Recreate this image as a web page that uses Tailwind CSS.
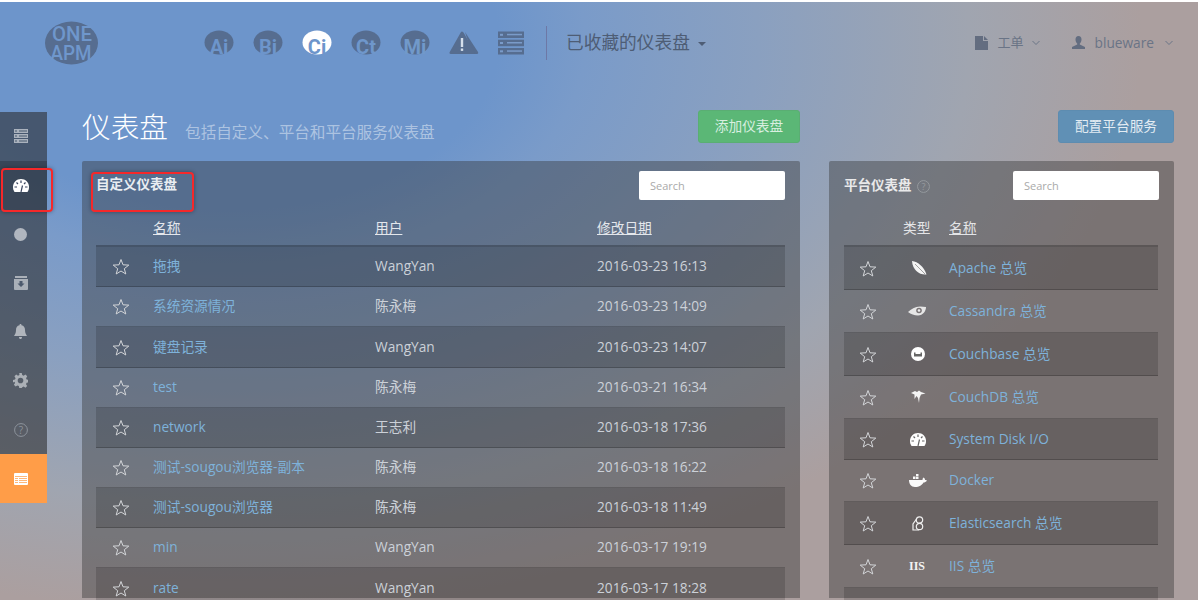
<!DOCTYPE html>
<html><head><meta charset="utf-8"><script src="https://cdn.jsdelivr.net/npm/@tailwindcss/browser@4"></script></head>
<body class="m-0">
<div class="relative w-[1198px] h-[600px] overflow-hidden border-t-2 border-white bg-[radial-gradient(ellipse_960px_600px_at_230px_40px,#6d95cb_28%,#7a9bc9_37%,#8aa0c0_55%,#a0a5b0_77%,#ab9f9f_95%)] font-['Open_Sans','Noto_Sans_CJK_SC',sans-serif] text-[14px]">

<!-- header -->
<header class="flex items-center h-[108px] pb-[26px] text-[#566a88]">
  <svg class="ml-[44px] w-[56px] h-[44px]" viewBox="0 0 56 44"><ellipse cx="27.500" cy="22" rx="26.500" ry="21.500" fill="#566d90"/><text x="28" y="20" text-anchor="middle" font-size="21" font-weight="500" font-family="Roboto" fill="#6f97cc" textLength="40" lengthAdjust="spacingAndGlyphs">ONE</text><text x="27" y="39" text-anchor="middle" font-size="21" font-weight="500" font-family="Roboto" fill="#6f97cc" textLength="41" lengthAdjust="spacingAndGlyphs">APM</text></svg>
  <div class="flex items-center ml-[104px] gap-[19px]">
    <svg class="w-[30px] h-[26px]" viewBox="0 0 30 26"><ellipse cx="15" cy="12.500" rx="14.500" ry="12" fill="#566d90"/><text x="15" y="24" text-anchor="middle" font-size="20" font-weight="700" font-family="Roboto" fill="#6d95cb">Ai</text></svg>
    <svg class="w-[30px] h-[26px]" viewBox="0 0 30 26"><ellipse cx="15" cy="12.500" rx="14.500" ry="12" fill="#566d90"/><text x="15" y="24" text-anchor="middle" font-size="20" font-weight="700" font-family="Roboto" fill="#6d95cb">Bi</text></svg>
    <svg class="w-[30px] h-[26px]" viewBox="0 0 30 26"><ellipse cx="15" cy="12.500" rx="14.500" ry="12" fill="#fff"/><text x="15" y="24" text-anchor="middle" font-size="20" font-weight="700" font-family="Roboto" fill="#6d95cb">Ci</text></svg>
    <svg class="w-[30px] h-[26px]" viewBox="0 0 30 26"><ellipse cx="15" cy="12.500" rx="14.500" ry="12" fill="#566d90"/><text x="15" y="24" text-anchor="middle" font-size="20" font-weight="700" font-family="Roboto" fill="#6f97cb">Ct</text></svg>
    <svg class="w-[30px] h-[26px]" viewBox="0 0 30 26"><ellipse cx="15" cy="12.500" rx="14.500" ry="12" fill="#566d90"/><text x="15" y="24" text-anchor="middle" font-size="20" font-weight="700" font-family="Roboto" fill="#7199ca">Mi</text></svg>
    <svg class="w-[30px] h-[24px]" viewBox="0 0 30 24"><path d="M16 1 L29 21 Q30 23 27 23 L23 23 Z" fill="#566d90"/><path d="M12 1 Q13 0 14.500 1.500 L25.500 20.500 Q26.500 23 24 23 L2 23 Q-0.500 23 1 20.500 Z" fill="#566d90"/><rect x="11.800" y="7" width="2.400" height="9" fill="#d5dfec"/><rect x="11.800" y="17.500" width="2.400" height="2.400" fill="#d5dfec"/></svg>
    <svg class="w-[27px] h-[24px]" viewBox="0 0 27 24"><g fill="#566d90"><rect width="26" height="6.500" y="0.500"/><rect width="26" height="6.500" y="8.700"/><rect width="26" height="6.500" y="17"/></g><g fill="#7a9bc9"><rect x="2" y="2.800" width="3" height="2"/><rect x="9" y="2.800" width="15" height="1.500"/><rect x="2" y="11" width="3" height="2"/><rect x="9" y="11" width="15" height="1.500"/><rect x="2" y="19.300" width="3" height="2"/><rect x="9" y="19.300" width="15" height="1.500"/></g></svg>
  </div>
  <div class="ml-[21px] w-px h-[34px] bg-[#6d78a6]"></div>
  <span class="ml-[19px] text-[17.700px] text-[#4e5d75] leading-none">已收藏的仪表盘</span>
  <span class="ml-[8px] mt-[2px] border-x-[4px] border-x-transparent border-t-[4px] border-t-[#4e5d75]"></span>
  <div class="flex items-center ml-auto text-[#6a7486]">
    <svg class="w-[13px] h-[14px]" viewBox="0 0 13 14"><path d="M0 0H8V5H13V14H0Z M9 0L13 4H9Z" fill="#636d80"/></svg>
    <span class="ml-[10px] text-[13px]">工单</span>
    <svg class="ml-[8px] w-[8px] h-[6px]" viewBox="0 0 8 6"><path d="M.5 1 4 4.500 7.500 1" fill="none" stroke="#6a7486"/></svg>
    <svg class="ml-[32px] w-[13px] h-[13px]" viewBox="0 0 13 13"><path d="M6.500 0C8.500 0 9.500 1.500 9.500 3.500 9.500 5.500 8.500 7 7.800 7.500V8.500L13 11V13H0V11L5.200 8.500V7.500C4.500 7 3.500 5.500 3.500 3.500 3.500 1.500 4.500 0 6.500 0Z" fill="#636d80"/></svg>
    <span class="ml-[10px] mr-[11px] text-[13.700px]">blueware</span>
    <svg class="mr-[25px] w-[8px] h-[6px]" viewBox="0 0 8 6"><path d="M.5 1 4 4.500 7.500 1" fill="none" stroke="#6a7486"/></svg>
  </div>
</header>

<div class="flex">
  <!-- sidebar -->
  <nav class="w-[47px] h-[391px] mt-[2px] flex flex-col bg-[rgba(40,40,40,0.56)] text-[#b9bfc8]">
    <div class="h-[49px] flex items-center justify-center pr-[6px]"><svg class="w-[14px] h-[14px]" viewBox="0 0 14 14"><g fill="#aab2bd"><rect width="14" height="4" y="0"/><rect width="14" height="4" y="5"/><rect width="14" height="4" y="10"/></g><g fill="#47586f"><rect x="1" y="1.500" width="2" height="1"/><rect x="5" y="1.500" width="8" height="1"/><rect x="1" y="6.500" width="2" height="1"/><rect x="5" y="6.500" width="8" height="1"/><rect x="1" y="11.500" width="2" height="1"/><rect x="5" y="11.500" width="8" height="1"/></g></svg></div>
    <div class="h-[49px] flex items-center justify-center pr-[6px] bg-black/20"><svg class="w-[16px] h-[13px]" viewBox="0 0 16 13"><path d="M8 0C12.500 0 16 3.500 16 8 16 10 15.500 11.500 14.500 13H1.500C.5 11.500 0 10 0 8 0 3.500 3.500 0 8 0Z" fill="#fff"/><g stroke="#3b4760" stroke-width="1.200"><path d="M8 1.500V4M3.500 3.500 5 5M12.500 3.500 11 5M1.500 8H4M14.500 8H12M8 13 9.500 6.500"/></g></svg></div>
    <div class="h-[49px] flex items-center justify-center pr-[6px]"><span class="w-[13px] h-[13px] rounded-full bg-[#b0b6bf]"></span></div>
    <div class="h-[49px] flex items-center justify-center pr-[6px]"><svg class="w-[14px] h-[14px]" viewBox="0 0 14 14"><path d="M1 0H13V2H1ZM0 3H14V13Q14 14 13 14H1Q0 14 0 13Z" fill="#aab0b8"/><path d="M5.500 5H8.500V7.500H10.500L7 11 3.500 7.500H5.500Z" fill="#4d5a6d"/></svg></div>
    <div class="h-[49px] flex items-center justify-center pr-[6px]"><svg class="w-[13px] h-[15px]" viewBox="0 0 13 15"><path d="M6.500 0C7.200 0 7.500 .5 7.500 1.200 10 1.700 11 3.500 11 6 11 9 12 10.500 13 12H0C1 10.500 2 9 2 6 2 3.500 3 1.700 5.500 1.200 5.500 .5 5.800 0 6.500 0ZM5 13H8C8 14.500 7.300 15 6.500 15 5.700 15 5 14.500 5 13Z" fill="#b0b5bc"/></svg></div>
    <div class="h-[49px] flex items-center justify-center pr-[6px]"><svg class="w-[15px] h-[15px]" viewBox="0 0 24 24"><path fill-rule="evenodd" d="M10 0h4l.7 3.300 2.300 1 2.900-1.800 2.800 2.800L20.900 8.200l.9 2.200 3.200.6v4l-3.300.7-.9 2.200 1.900 2.800-2.800 2.800-2.900-1.800-2.200.9L14 24h-4l-.7-3.300-2.200-.9-2.900 1.800-2.800-2.800 1.900-2.800-.9-2.200L0 15v-4l3.200-.6.900-2.200L2.300 5.300l2.800-2.800L8 4.300l2.300-1ZM12 7.500a4.500 4.500 0 1 0 0 9 4.500 4.500 0 0 0 0-9Z" fill="#abb0b6"/></svg></div>
    <div class="h-[49px] flex items-center justify-center pr-[6px]"><svg class="w-[14px] h-[14px]" viewBox="0 0 14 14"><circle cx="7" cy="7" r="6.400" fill="none" stroke="#8d939c" stroke-width="1"/><text x="7" y="10.500" text-anchor="middle" font-size="10" fill="#8d939c" font-family="Open Sans">?</text></svg></div>
    <div class="h-[49px] flex items-center justify-center pr-[6px] bg-[#ff9d48]"><svg class="w-[14px] h-[12px]" viewBox="0 0 14 12"><rect width="14" height="12" rx="1" fill="#fff"/><g fill="#ffb87a"><rect x="1" y="3" width="12" height="1"/><rect x="1" y="5" width="3" height="1"/><rect x="5" y="5" width="8" height="1"/><rect x="1" y="7" width="3" height="1"/><rect x="5" y="7" width="8" height="1"/><rect x="1" y="9" width="3" height="1"/><rect x="5" y="9" width="8" height="1"/></g></svg></div>
  </nav>

  <main class="ml-[35px] flex gap-[29px] items-start">
    <!-- left column -->
    <section class="w-[718px]">
      <div class="h-[51px] flex items-start">
        <h1 class="text-[28.700px] font-light text-white leading-[33px]">仪表盘</h1>
        <span class="ml-[17px] mt-[12px] text-[15.600px] leading-[20px] text-white/45">包括自定义、平台和平台服务仪表盘</span>
        <button class="ml-auto w-[102px] h-[33px] rounded-[3px] bg-[#5bb776] border border-[#5aae73] text-[13.700px] text-[#d9efe0]">添加仪表盘</button>
      </div>
      <div class="h-[437px] rounded-t-[2px] bg-[rgba(50,50,50,0.4)] pt-[10px] pl-[14px] pr-[15px]">
        <div class="flex justify-between h-[29px]">
          <span class="text-[13.500px] font-bold text-[#e9edf2] leading-[27px]">自定义仪表盘</span>
          <span class="w-[146px] h-[29px] rounded-[2px] bg-white text-[11px] text-[#aaa] pl-[11px] leading-[30px]">Search</span>
        </div>
        <div class="grid grid-cols-[57px_222px_222px_1fr] h-[47px] pt-[18px] text-[#e4e7ec] leading-[19px] text-[13.700px] border-b-2 border-black/25"><span></span><span class="underline">名称</span><span class="underline">用户</span><span class="underline">修改日期</span></div>
        <div class="text-[#ccd1d8] text-[13.700px]">
          <div class="grid grid-cols-[57px_222px_222px_1fr] items-center h-[40px] bg-black/15 border-b border-black/20"><svg class="ml-[16px] w-[18px] h-[17px]" viewBox="0 0 18 17"><path d="M9 1.500 11 6.800 16.800 7.100 12.300 10.700 13.800 16 9 13 4.200 16 5.700 10.700 1.200 7.100 7 6.800Z" fill="none" stroke="#d3d5d8" stroke-width="1"/></svg><span class="text-[#7eb2da]">拖拽</span><span>WangYan</span><span>2016-03-23 16:13</span></div>
          <div class="grid grid-cols-[57px_222px_222px_1fr] items-center h-[40px] border-b border-black/20"><svg class="ml-[16px] w-[18px] h-[17px]" viewBox="0 0 18 17"><path d="M9 1.500 11 6.800 16.800 7.100 12.300 10.700 13.800 16 9 13 4.200 16 5.700 10.700 1.200 7.100 7 6.800Z" fill="none" stroke="#d3d5d8" stroke-width="1"/></svg><span class="text-[#7eb2da]">系统资源情况</span><span>陈永梅</span><span>2016-03-23 14:09</span></div>
          <div class="grid grid-cols-[57px_222px_222px_1fr] items-center h-[41px] bg-black/15 border-b border-black/20"><svg class="ml-[16px] w-[18px] h-[17px]" viewBox="0 0 18 17"><path d="M9 1.500 11 6.800 16.800 7.100 12.300 10.700 13.800 16 9 13 4.200 16 5.700 10.700 1.200 7.100 7 6.800Z" fill="none" stroke="#d3d5d8" stroke-width="1"/></svg><span class="text-[#7eb2da]">键盘记录</span><span>WangYan</span><span>2016-03-23 14:07</span></div>
          <div class="grid grid-cols-[57px_222px_222px_1fr] items-center h-[40px] border-b border-black/20"><svg class="ml-[16px] w-[18px] h-[17px]" viewBox="0 0 18 17"><path d="M9 1.500 11 6.800 16.800 7.100 12.300 10.700 13.800 16 9 13 4.200 16 5.700 10.700 1.200 7.100 7 6.800Z" fill="none" stroke="#d3d5d8" stroke-width="1"/></svg><span class="text-[#7eb2da]">test</span><span>陈永梅</span><span>2016-03-21 16:34</span></div>
          <div class="grid grid-cols-[57px_222px_222px_1fr] items-center h-[40px] bg-black/15 border-b border-black/20"><svg class="ml-[16px] w-[18px] h-[17px]" viewBox="0 0 18 17"><path d="M9 1.500 11 6.800 16.800 7.100 12.300 10.700 13.800 16 9 13 4.200 16 5.700 10.700 1.200 7.100 7 6.800Z" fill="none" stroke="#d3d5d8" stroke-width="1"/></svg><span class="text-[#7eb2da]">network</span><span>王志利</span><span>2016-03-18 17:36</span></div>
          <div class="grid grid-cols-[57px_222px_222px_1fr] items-center h-[40px] border-b border-black/20"><svg class="ml-[16px] w-[18px] h-[17px]" viewBox="0 0 18 17"><path d="M9 1.500 11 6.800 16.800 7.100 12.300 10.700 13.800 16 9 13 4.200 16 5.700 10.700 1.200 7.100 7 6.800Z" fill="none" stroke="#d3d5d8" stroke-width="1"/></svg><span class="text-[#7eb2da]">测试-sougou浏览器-副本</span><span>陈永梅</span><span>2016-03-18 16:22</span></div>
          <div class="grid grid-cols-[57px_222px_222px_1fr] items-center h-[40px] bg-black/15 border-b border-black/20"><svg class="ml-[16px] w-[18px] h-[17px]" viewBox="0 0 18 17"><path d="M9 1.500 11 6.800 16.800 7.100 12.300 10.700 13.800 16 9 13 4.200 16 5.700 10.700 1.200 7.100 7 6.800Z" fill="none" stroke="#d3d5d8" stroke-width="1"/></svg><span class="text-[#7eb2da]">测试-sougou浏览器</span><span>陈永梅</span><span>2016-03-18 11:49</span></div>
          <div class="grid grid-cols-[57px_222px_222px_1fr] items-center h-[40px] border-b border-black/20"><svg class="ml-[16px] w-[18px] h-[17px]" viewBox="0 0 18 17"><path d="M9 1.500 11 6.800 16.800 7.100 12.300 10.700 13.800 16 9 13 4.200 16 5.700 10.700 1.200 7.100 7 6.800Z" fill="none" stroke="#d3d5d8" stroke-width="1"/></svg><span class="text-[#7eb2da]">min</span><span>WangYan</span><span>2016-03-17 19:19</span></div>
          <div class="grid grid-cols-[57px_222px_222px_1fr] items-center h-[40px] bg-black/15"><svg class="ml-[16px] w-[18px] h-[17px]" viewBox="0 0 18 17"><path d="M9 1.500 11 6.800 16.800 7.100 12.300 10.700 13.800 16 9 13 4.200 16 5.700 10.700 1.200 7.100 7 6.800Z" fill="none" stroke="#d3d5d8" stroke-width="1"/></svg><span class="text-[#7eb2da]">rate</span><span>WangYan</span><span>2016-03-17 18:28</span></div>
        </div>
      </div>
    </section>

    <!-- right column -->
    <section class="w-[345px]">
      <div class="h-[51px] flex justify-end items-start"><button class="w-[116px] h-[33px] rounded-[3px] bg-[#6090b5] border border-[#5d8cb0] text-[13.700px] text-[#e3ecf3]">配置平台服务</button></div>
      <div class="h-[437px] rounded-t-[2px] bg-[rgba(50,50,50,0.4)] pt-[10px] pl-[15px] pr-[15px]">
        <div class="flex items-center h-[29px]">
          <span class="text-[13.500px] font-bold text-[#e9e9ea]">平台仪表盘</span>
          <svg class="ml-[5px] w-[13px] h-[13px] mt-[2px]" viewBox="0 0 14 14"><circle cx="7" cy="7" r="6.400" fill="none" stroke="#969a9f"/><text x="7" y="10.500" text-anchor="middle" font-size="10" fill="#969a9f" font-family="Open Sans">?</text></svg>
          <span class="ml-auto w-[146px] h-[29px] rounded-[2px] bg-white text-[11px] text-[#aaa] pl-[11px] leading-[30px]">Search</span>
        </div>
        <div class="mr-[1px] grid grid-cols-[59px_46px_1fr] h-[47px] pt-[18px] text-[#e4e5e7] leading-[19px] text-[13.700px] border-b-2 border-black/25"><span></span><span>类型</span><span class="underline">名称</span></div>
        <div class="mr-[1px] text-[13.700px] text-[#7eb2da]">
          <div class="grid grid-cols-[59px_46px_1fr] items-center h-[43px] bg-black/15 border-b border-black/20"><svg class="ml-[15px] w-[18px] h-[17px]" viewBox="0 0 18 17"><path d="M9 1.500 11 6.800 16.800 7.100 12.300 10.700 13.800 16 9 13 4.200 16 5.700 10.700 1.200 7.100 7 6.800Z" fill="none" stroke="#d3d5d8" stroke-width="1"/></svg><svg class="ml-[8px] w-[16px] h-[16px]" viewBox="0 0 16 16"><path d="M1 1C7 1.500 13 7 15.500 14.500 9 15.500 1.500 10 1 1Z" fill="#f4f4f4"/><path d="M4 4 14 14" stroke="#666" stroke-width=".6"/></svg><span>Apache 总览</span></div>
          <div class="grid grid-cols-[59px_46px_1fr] items-center h-[43px] border-b border-black/20"><svg class="ml-[15px] w-[18px] h-[17px]" viewBox="0 0 18 17"><path d="M9 1.500 11 6.800 16.800 7.100 12.300 10.700 13.800 16 9 13 4.200 16 5.700 10.700 1.200 7.100 7 6.800Z" fill="none" stroke="#d3d5d8" stroke-width="1"/></svg><svg class="ml-[5px] w-[18px] h-[10px]" viewBox="0 0 18 10"><path d="M0 6C3 3 7 .5 12 .5L18 1C18 5 15 9.500 10 9.500 6 9.500 3 8 0 6Z" fill="#e6e6e6"/><circle cx="11" cy="4.500" r="2.800" fill="#7a7577"/><circle cx="11" cy="4.500" r="1.300" fill="#eee"/></svg><span>Cassandra 总览</span></div>
          <div class="grid grid-cols-[59px_46px_1fr] items-center h-[43px] bg-black/15 border-b border-black/20"><svg class="ml-[15px] w-[18px] h-[17px]" viewBox="0 0 18 17"><path d="M9 1.500 11 6.800 16.800 7.100 12.300 10.700 13.800 16 9 13 4.200 16 5.700 10.700 1.200 7.100 7 6.800Z" fill="none" stroke="#d3d5d8" stroke-width="1"/></svg><svg class="ml-[8px] w-[14px] h-[14px]" viewBox="0 0 14 14"><circle cx="7" cy="7" r="7" fill="#fff"/><path d="M3 5.500H4.500V7H9.500V5.500H11V9.500H3Z" fill="#666"/></svg><span>Couchbase 总览</span></div>
          <div class="grid grid-cols-[59px_46px_1fr] items-center h-[43px] border-b border-black/20"><svg class="ml-[15px] w-[18px] h-[17px]" viewBox="0 0 18 17"><path d="M9 1.500 11 6.800 16.800 7.100 12.300 10.700 13.800 16 9 13 4.200 16 5.700 10.700 1.200 7.100 7 6.800Z" fill="none" stroke="#d3d5d8" stroke-width="1"/></svg><svg class="ml-[7px] w-[16px] h-[14px]" viewBox="0 0 16 14"><path d="M1 3 5 1 7 2 9 .5 11 2 15.500 3.500 11 4.500 9.500 8 9 13 8 8 6.500 6 4.500 9 4.500 4.500Z" fill="#f4f4f4"/></svg><span>CouchDB 总览</span></div>
          <div class="grid grid-cols-[59px_46px_1fr] items-center h-[41px] bg-black/15 border-b border-black/20"><svg class="ml-[15px] w-[18px] h-[17px]" viewBox="0 0 18 17"><path d="M9 1.500 11 6.800 16.800 7.100 12.300 10.700 13.800 16 9 13 4.200 16 5.700 10.700 1.200 7.100 7 6.800Z" fill="none" stroke="#d3d5d8" stroke-width="1"/></svg><svg class="ml-[7px] w-[16px] h-[13px]" viewBox="0 0 16 13"><path d="M8 0C12.500 0 16 3.500 16 8 16 10 15.500 11.500 14.500 13H1.500C.5 11.500 0 10 0 8 0 3.500 3.500 0 8 0Z" fill="#fff"/><g stroke="#666" stroke-width="1.200"><path d="M8 1.500V4M3.500 3.500 5 5M12.500 3.500 11 5M1.500 8H4M14.500 8H12M8 13 9.500 6.500"/></g></svg><span>System Disk I/O</span></div>
          <div class="grid grid-cols-[59px_46px_1fr] items-center h-[42px] border-b border-black/20"><svg class="ml-[15px] w-[18px] h-[17px]" viewBox="0 0 18 17"><path d="M9 1.500 11 6.800 16.800 7.100 12.300 10.700 13.800 16 9 13 4.200 16 5.700 10.700 1.200 7.100 7 6.800Z" fill="none" stroke="#d3d5d8" stroke-width="1"/></svg><svg class="ml-[6px] w-[18px] h-[13px]" viewBox="0 0 18 13"><path d="M0 6H13.500C13.500 5 13.800 4 14.500 3.500 15.500 4 16 5 16 6 17 5.800 17.500 6 18 6.500 17 8 15.500 8.500 14.500 8.500 13 11 10.500 13 6 13 2 13 0 10 0 6ZM4 2.500H6.500V5H4ZM7 2.500H9.500V5H7ZM7 0H9.500V2H7Z" fill="#fafafa"/></svg><span>Docker</span></div>
          <div class="grid grid-cols-[59px_46px_1fr] items-center h-[43px] bg-black/15 border-b border-black/20"><svg class="ml-[15px] w-[18px] h-[17px]" viewBox="0 0 18 17"><path d="M9 1.500 11 6.800 16.800 7.100 12.300 10.700 13.800 16 9 13 4.200 16 5.700 10.700 1.200 7.100 7 6.800Z" fill="none" stroke="#d3d5d8" stroke-width="1"/></svg><svg class="ml-[9px] w-[12px] h-[15px]" viewBox="0 0 12 15"><g fill="none" stroke="#f0f0f0" stroke-width="1.200"><circle cx="7.500" cy="4" r="3.200"/><circle cx="7.500" cy="10.500" r="3.200"/><path d="M4.500 3 1 8V14H7"/></g></svg><span>Elasticsearch 总览</span></div>
          <div class="grid grid-cols-[59px_46px_1fr] items-center h-[43px] border-b border-black/20"><svg class="ml-[15px] w-[18px] h-[17px]" viewBox="0 0 18 17"><path d="M9 1.500 11 6.800 16.800 7.100 12.300 10.700 13.800 16 9 13 4.200 16 5.700 10.700 1.200 7.100 7 6.800Z" fill="none" stroke="#d3d5d8" stroke-width="1"/></svg><span class="ml-[6px] text-[12px] font-bold text-[#f2f2f2] font-['Liberation_Serif']">IIS</span><span>IIS 总览</span></div>
          <div class="h-[30px] bg-black/15"></div>
        </div>
      </div>
    </section>
  </main>
</div>

<!-- annotations -->
<div class="absolute left-[1px] top-[166px] w-[52px] h-[44px] rounded-[4px] border-[2.500px] border-[#f5282a] shadow-[0_0_4px_rgba(0,0,0,.35)]"></div>
<div class="absolute left-[91px] top-[170px] w-[103px] h-[40px] rounded-[4px] border-[2.500px] border-[#f5282a] shadow-[0_0_4px_rgba(0,0,0,.35)]"></div>
</div>
</body></html>
